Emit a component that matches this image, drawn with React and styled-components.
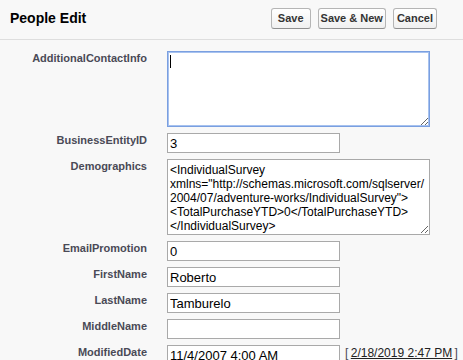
import React from "react";
import styled, { createGlobalStyle, css } from "styled-components";

const Global = createGlobalStyle`
  html, body {
    margin: 0;
    padding: 0;
    overflow: hidden;
    background: #f8f8f8;
  }
  body {
    font-family: "Liberation Sans", Arial, sans-serif;
  }
`;

const Page = styled.div`
  width: 463px;
  background: #f8f8f8;
`;

const Header = styled.div`
  box-sizing: border-box;
  height: 40px;
  display: flex;
  align-items: center;
  justify-content: space-between;
  padding: 0 26px 3px 10px;
  border-bottom: 1px solid #dedede;
`;

const Title = styled.h2`
  margin: 0;
  font-size: 14px;
  font-weight: bold;
  color: #000;
`;

const Buttons = styled.div`
  display: flex;
  gap: 7px;
`;

const Button = styled.button`
  box-sizing: border-box;
  height: 21px;
  padding: 0 ${(p) => p.$pad || 5}px;
  font-family: "Liberation Sans", Arial, sans-serif;
  font-size: 11px;
  font-weight: bold;
  color: #333;
  background: linear-gradient(#ffffff, #f0f0f0);
  border: 1px solid #b5b5b5;
  border-bottom-color: #8f8f8f;
  border-radius: 3px;
  cursor: pointer;
`;

const Form = styled.div`
  display: grid;
  grid-template-columns: 147px 1fr;
  column-gap: 20px;
  row-gap: 6px;
  padding-top: 11px;
`;

const Label = styled.label`
  text-align: right;
  font-size: 11px;
  line-height: 13px;
  font-weight: bold;
  color: #4a4a56;
  padding-top: 1px;
`;

const Field = styled.div`
  position: relative;
  display: flex;
  align-items: center;
`;

const fieldBase = css`
  box-sizing: border-box;
  margin: 0;
  font-family: "Liberation Sans", Arial, sans-serif;
  font-size: 13px;
  color: #000;
  background: #fff;
  border: 1px solid #a9a9a9;
  outline: none;
`;

const Input = styled.input`
  ${fieldBase};
  width: 173px;
  height: 20px;
  padding: 0 2px;
`;

const TextArea = styled.textarea`
  ${fieldBase};
  display: block;
  width: 263px;
  height: 76px;
  padding: 3px 2px 1px;
  font-size: 12px;
  line-height: 14px;
  white-space: pre;
  overflow: hidden;
  resize: both;
  ${(p) =>
    p.$focused &&
    css`
      border-color: #7a9fe0;
      box-shadow: inset 0 0 0 1px #a7c2ef;
    `}
`;

const Caret = styled.span`
  position: absolute;
  left: 3px;
  top: 4px;
  width: 1px;
  height: 13px;
  background: #000;
`;

const DateHint = styled.span`
  align-self: flex-start;
  margin: 2px 0 0 5px;
  font-size: 12px;
  line-height: 12px;
  color: #4a4a56;
  white-space: nowrap;
`;

const DateLink = styled.a`
  color: #222;
  text-decoration: underline;
`;

const demographics =
  '<IndividualSurvey\nxmlns="http://schemas.microsoft.com/sqlserver/\n2004/07/adventure-works/IndividualSurvey">\n<TotalPurchaseYTD>0</TotalPurchaseYTD>\n</IndividualSurvey>';

const inputs = [
  ["EmailPromotion", "0"],
  ["FirstName", "Roberto"],
  ["LastName", "Tamburelo"],
  ["MiddleName", ""],
];

export default function App() {
  return (
    <Page>
      <Global />
      <Header>
        <Title>People Edit</Title>
        <Buttons>
          <Button $pad={6}>Save</Button>
          <Button $pad={2}>Save &amp; New</Button>
          <Button $pad={3}>Cancel</Button>
        </Buttons>
      </Header>
      <Form>
        <Label>AdditionalContactInfo</Label>
        <Field>
          <TextArea $focused defaultValue="" />
          <Caret />
        </Field>

        <Label>BusinessEntityID</Label>
        <Field>
          <Input defaultValue="3" />
        </Field>

        <Label>Demographics</Label>
        <Field>
          <TextArea wrap="off" defaultValue={demographics} />
        </Field>

        {inputs.map(([label, value]) => (
          <React.Fragment key={label}>
            <Label>{label}</Label>
            <Field>
              <Input defaultValue={value} />
            </Field>
          </React.Fragment>
        ))}

        <Label>ModifiedDate</Label>
        <Field>
          <Input defaultValue="11/4/2007 4:00 AM" />
          <DateHint>
            [&thinsp;<DateLink href="#">2/18/2019 2:47 PM</DateLink>&thinsp;]
          </DateHint>
        </Field>
      </Form>
    </Page>
  );
}
